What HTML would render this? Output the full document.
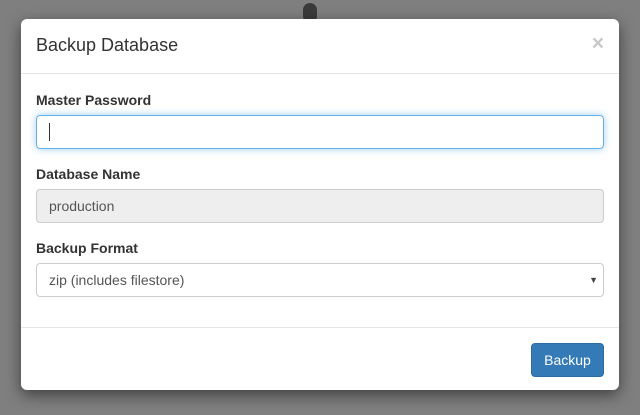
<!DOCTYPE html>
<html><head><style>
*{box-sizing:border-box;margin:0;padding:0}
body{width:640px;height:415px;background:#7f7f7f;font-family:"Liberation Sans",sans-serif;position:relative;overflow:hidden;color:#333}
.pill{position:absolute;left:303px;top:3px;width:14px;height:20px;border-radius:7px;background:#3a3a3a}
.modal{position:absolute;left:21px;top:19px;width:598px;height:371px;background:#fff;border-radius:6px;box-shadow:0 5px 15px rgba(0,0,0,.5)}
.hd{height:55px;border-bottom:1px solid #e5e5e5;position:relative}
.hd h4{position:absolute;left:15px;top:16px;font-size:18px;font-weight:normal;color:#333}
.x{position:absolute;right:15px;top:13px;font-size:21px;font-weight:bold;color:#c8c8c8}
label{position:absolute;left:15px;font-size:14px;font-weight:bold}
.in{position:absolute;left:15px;width:568px;height:34px;border:1px solid #ccc;border-radius:4px;font-size:14px;padding:8px 12px;color:#555}
.foc{border-color:#66afe9;box-shadow:0 0 8px rgba(102,175,233,.6)}
.cur{position:absolute;left:12px;top:7px;width:1px;height:18px;background:#333}
.dis{background:#eee}
.arr{position:absolute;right:5px;top:11px;font-size:9px;color:#444}
.ft{position:absolute;left:0;top:308px;width:100%;border-top:1px solid #e5e5e5}
.btn{position:absolute;left:510px;top:324px;width:73px;height:34px;background:#337ab7;border:1px solid #2e6da4;border-radius:4px;color:#fff;font-size:14px;text-align:center;line-height:32px}
</style></head><body>
<div class="pill"></div>
<div class="modal">
<div class="hd"><h4>Backup Database</h4><div class="x">×</div></div>
<label style="top:73px">Master Password</label>
<div class="in foc" style="top:96px"><div class="cur"></div></div>
<label style="top:147px">Database Name</label>
<div class="in dis" style="top:170px">production</div>
<label style="top:221px">Backup Format</label>
<div class="in" style="top:244px;color:#555">zip (includes filestore)<span class="arr">▼</span></div>
<div class="ft"></div>
<div class="btn">Backup</div>
</div>
</body></html>
